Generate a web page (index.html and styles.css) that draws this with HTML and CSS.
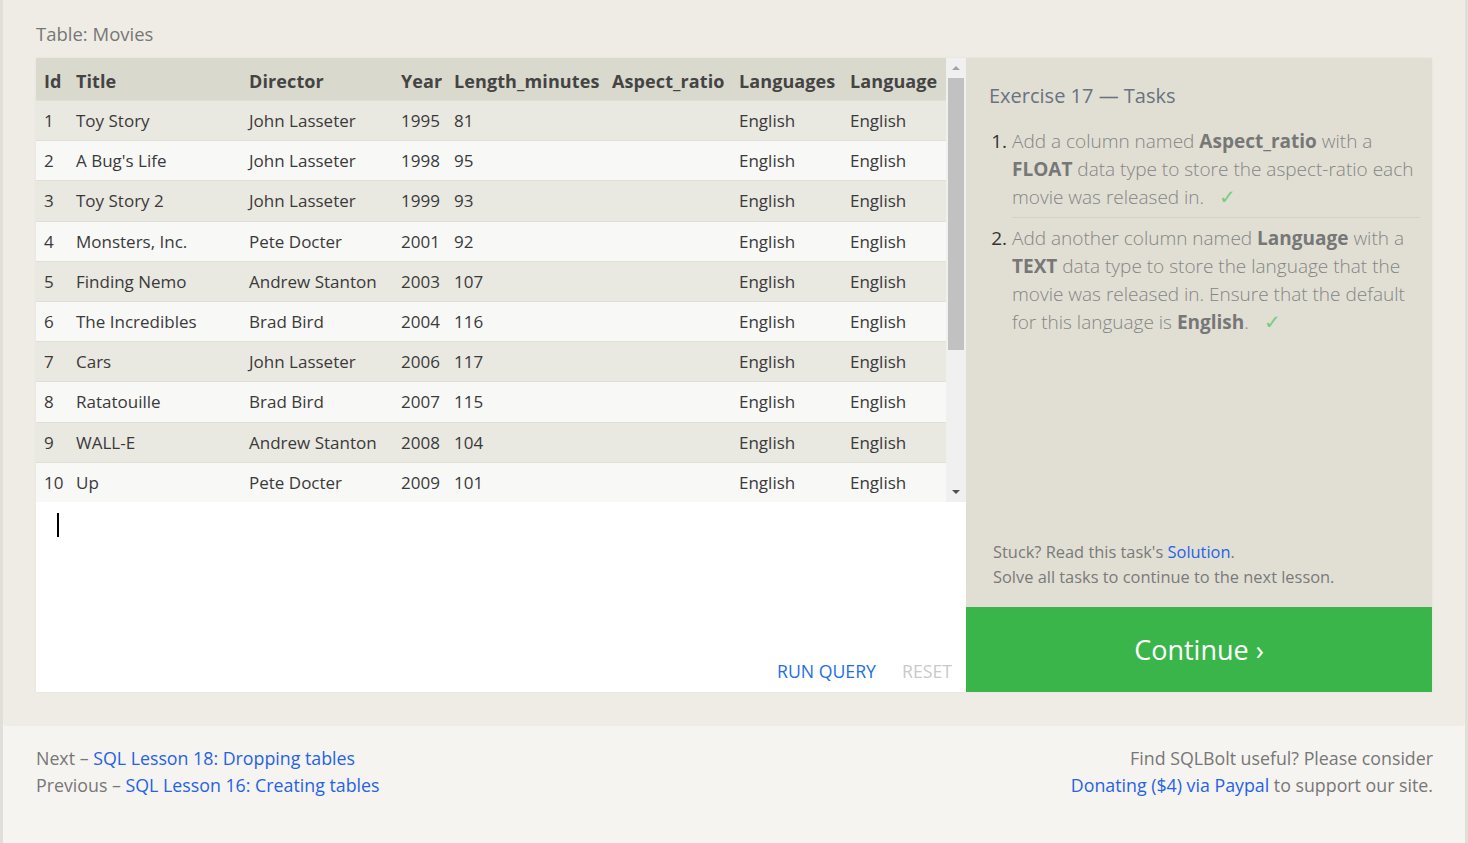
FILE: index.html
```html
<!DOCTYPE html>
<html>
<head>
<meta charset="utf-8">
<title>SQL Lesson 17</title>
<link rel="stylesheet" href="styles.css">
</head>
<body>
<div class="page">
  <section class="exercise">
    <div class="caption">Table: Movies</div>
    <div class="workspace">
      <div class="left">
        <div class="table-wrap">
          <table class="results">
            <colgroup>
              <col class="c-id"><col class="c-title"><col class="c-dir"><col class="c-year"><col class="c-len"><col class="c-asp"><col class="c-langs"><col class="c-lang">
            </colgroup>
            <thead>
              <tr><th>Id</th><th>Title</th><th>Director</th><th>Year</th><th>Length_minutes</th><th>Aspect_ratio</th><th>Languages</th><th>Language</th></tr>
            </thead>
            <tbody>
              <tr><td>1</td><td>Toy Story</td><td>John Lasseter</td><td>1995</td><td>81</td><td></td><td>English</td><td>English</td></tr>
              <tr><td>2</td><td>A Bug's Life</td><td>John Lasseter</td><td>1998</td><td>95</td><td></td><td>English</td><td>English</td></tr>
              <tr><td>3</td><td>Toy Story 2</td><td>John Lasseter</td><td>1999</td><td>93</td><td></td><td>English</td><td>English</td></tr>
              <tr><td>4</td><td>Monsters, Inc.</td><td>Pete Docter</td><td>2001</td><td>92</td><td></td><td>English</td><td>English</td></tr>
              <tr><td>5</td><td>Finding Nemo</td><td>Andrew Stanton</td><td>2003</td><td>107</td><td></td><td>English</td><td>English</td></tr>
              <tr><td>6</td><td>The Incredibles</td><td>Brad Bird</td><td>2004</td><td>116</td><td></td><td>English</td><td>English</td></tr>
              <tr><td>7</td><td>Cars</td><td>John Lasseter</td><td>2006</td><td>117</td><td></td><td>English</td><td>English</td></tr>
              <tr><td>8</td><td>Ratatouille</td><td>Brad Bird</td><td>2007</td><td>115</td><td></td><td>English</td><td>English</td></tr>
              <tr><td>9</td><td>WALL-E</td><td>Andrew Stanton</td><td>2008</td><td>104</td><td></td><td>English</td><td>English</td></tr>
              <tr><td>10</td><td>Up</td><td>Pete Docter</td><td>2009</td><td>101</td><td></td><td>English</td><td>English</td></tr>
            </tbody>
          </table>
          <div class="scrollbar">
            <div class="arrow arrow-up"></div>
            <div class="thumb"></div>
            <div class="track-rest"></div>
            <div class="arrow arrow-down"></div>
          </div>
        </div>
        <div class="editor">
          <div class="cursor"></div>
          <div class="editor-actions">
            <a class="run">RUN QUERY</a>
            <a class="reset">RESET</a>
          </div>
        </div>
      </div>
      <div class="right">
        <div class="tasks">
          <h2 class="tasks-title">Exercise 17 — Tasks</h2>
          <ol class="task-list">
            <li>Add a column named <b>Aspect_ratio</b> with a <b>FLOAT</b> data type to store the aspect-ratio each movie was released in. <span class="check">✓</span></li>
            <li>Add another column named <b>Language</b> with a <b>TEXT</b> data type to store the language that the movie was released in. Ensure that the default for this language is <b>English</b>. <span class="check">✓</span></li>
          </ol>
          <div class="stuck">
            <div>Stuck? Read this task's <a class="link">Solution</a>.</div>
            <div>Solve all tasks to continue to the next lesson.</div>
          </div>
        </div>
        <a class="continue">Continue ›</a>
      </div>
    </div>
  </section>
  <footer class="footer">
    <div class="nav-links">
      <div>Next – <a class="link">SQL Lesson 18: Dropping tables</a></div>
      <div>Previous – <a class="link">SQL Lesson 16: Creating tables</a></div>
    </div>
    <div class="donate">
      <div>Find SQLBolt useful? Please consider</div>
      <div><a class="link">Donating ($4) via Paypal</a> to support our site.</div>
    </div>
  </footer>
</div>
</body>
</html>
```

FILE: styles.css
```css
html, body {
  margin: 0;
  padding: 0;
}
body {
  background: #e2dfda;
  font-family: "Open Sans", "Noto Sans", sans-serif;
  color: #333;
  height: 843px;
  overflow: hidden;
}
.page {
  margin: 0 3px;
  background: #f6f4f0;
  height: 843px;
}
.exercise {
  background: #efece5;
  padding: 22px 33px 34px 33px;
  border-radius: 0 0 4px 4px;
}
.caption {
  font-size: 18.5px;
  line-height: 24px;
  color: #777;
  margin-bottom: 12px;
}
.workspace {
  display: flex;
  box-shadow: 0 0 2px rgba(0,0,0,0.06);
}
.left {
  width: 930px;
  display: flex;
  flex-direction: column;
}
.table-wrap {
  display: flex;
  height: 444px;
}
.results {
  width: 910px;
  table-layout: fixed;
  border-collapse: collapse;
  font-size: 17px;
}
.c-id { width: 32px; }
.c-title { width: 173px; }
.c-dir { width: 152px; }
.c-year { width: 53px; }
.c-len { width: 158px; }
.c-asp { width: 127px; }
.c-langs { width: 111px; }
.c-lang { width: 104px; }
.results th {
  background: #dad9cd;
  height: 39px;
  padding: 3px 0 0 8px;
  text-align: left;
  font-weight: 700;
  font-size: 18px;
  letter-spacing: 0.1px;
  color: #444;
  white-space: nowrap;
  overflow: hidden;
}
.results td {
  height: 39px;
  padding: 0 0 0 8px;
  border-top: 1px solid #e0dfd8;
  white-space: nowrap;
  color: #3a3a3a;
}
.results tbody tr:nth-child(odd) td {
  background: #e9e8e1;
}
.results tbody tr:nth-child(even) td {
  background: #f8f8f7;
}
.scrollbar {
  width: 20px;
  background: #f0f0f0;
  display: flex;
  flex-direction: column;
  align-items: center;
}
.arrow {
  width: 0;
  height: 0;
  border-left: 4px solid transparent;
  border-right: 4px solid transparent;
}
.arrow-up {
  border-bottom: 4px solid #a3a3a3;
  margin: 8px 0 8px;
}
.arrow-down {
  border-top: 4px solid #505050;
  margin: 8px 0 8px;
}
.thumb {
  width: 16px;
  height: 272px;
  background: #c1c1c1;
}
.track-rest {
  flex: 1;
}
.editor {
  background: #fff;
  height: 190px;
  display: flex;
  flex-direction: column;
  justify-content: space-between;
}
.cursor {
  width: 2px;
  height: 24px;
  background: #000;
  margin: 11px 0 0 21px;
}
.editor-actions {
  display: flex;
  justify-content: flex-end;
  gap: 26px;
  padding: 0 14px 9px 0;
  font-size: 17.7px;
  line-height: 24px;
}
.run {
  color: #1f6fe5;
}
.reset {
  color: #c9c9c9;
}
.right {
  width: 466px;
  display: flex;
  flex-direction: column;
}
.tasks {
  flex: 1;
  background: #e1dfd4;
  padding: 24px 12px 18px 23px;
  display: flex;
  flex-direction: column;
}
.tasks-title {
  margin: 0 0 16px;
  font-size: 20px;
  line-height: 28px;
  font-weight: 400;
  color: #6a7280;
}
.task-list {
  margin: 0;
  padding: 0 0 0 23px;
  font-size: 19px;
  line-height: 28px;
  font-weight: 300;
  color: #858585;
}
.task-list li {
  padding: 1px 0 6px;
}
.task-list li + li {
  border-top: 1px solid #d3d0c5;
  padding-top: 6px;
}
.task-list li::marker {
  color: #333;
  font-weight: 400;
}
.task-list b {
  color: #777;
  font-weight: 700;
}
.check {
  color: #7ccb82;
  margin-left: 10px;
  font-size: 20px;
}
.stuck {
  margin-top: auto;
  padding-left: 4px;
  font-size: 16.4px;
  line-height: 25px;
  color: #7a7a7a;
}
.link {
  color: #2562e6;
}
.continue {
  height: 85px;
  background: #3ab54a;
  color: #fff;
  font-size: 27px;
  display: flex;
  align-items: center;
  justify-content: center;
}
.footer {
  display: flex;
  justify-content: space-between;
  padding: 19px 32px 0 33px;
  font-size: 17.8px;
  line-height: 27px;
  color: #777;
}
.donate {
  text-align: right;
}
```
